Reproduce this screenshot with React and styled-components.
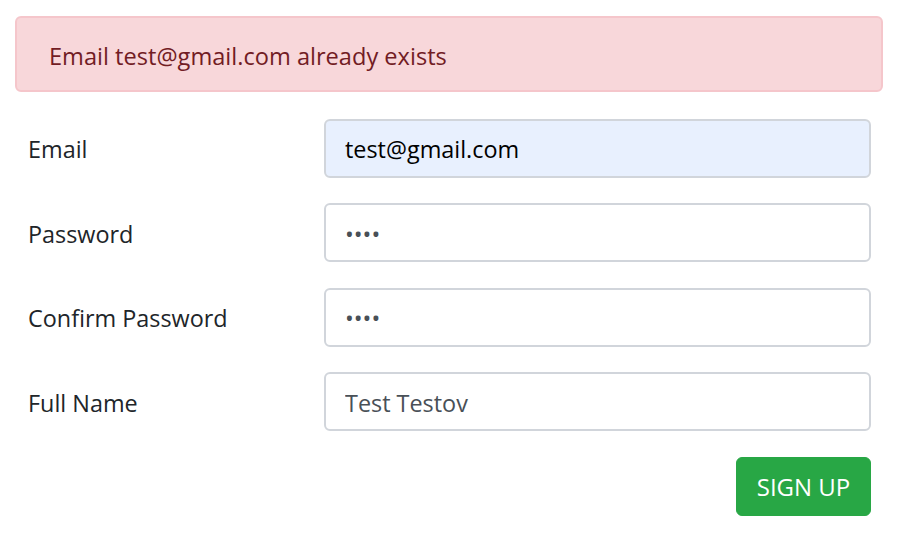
import React from "react";
import styled, { createGlobalStyle } from "styled-components";

const Global = createGlobalStyle`
  html, body { margin: 0; padding: 0; background: #fff; }
  body { font-family: "Open Sans", "Noto Sans", sans-serif; color: #212529; }
  * { box-sizing: border-box; }
`;

const Page = styled.div`
  padding: 16px 18px 0 15px;
  width: 901px;
`;

const Alert = styled.div`
  height: 76px;
  display: flex;
  align-items: center;
  padding: 3px 32px 0;
  background: #f8d7da;
  border: 2px solid #f5c6cb;
  border-radius: 6px;
  color: #721c24;
  font-size: 23.6px;
  margin-bottom: 26.5px;
`;

const Form = styled.form`
  padding: 0 12px;
  display: flex;
  flex-direction: column;
  gap: 25.5px;
`;

const Row = styled.div`
  display: grid;
  grid-template-columns: 297px 1fr;
  align-items: center;
  height: 59px;
`;

const Label = styled.label`
  font-size: 23.4px;
  color: #212529;
  padding: 2px 0 0 1px;
`;

const Input = styled.input`
  height: 59px;
  width: 100%;
  padding: 2px 19px 0;
  font-family: inherit;
  font-size: 23.4px;
  color: ${(p) => (p.$autofill ? "#000" : "#495057")};
  background: ${(p) => (p.$autofill ? "#e8f0fe" : "#fff")};
  border: 2px solid #d1d5db;
  border-radius: 6px;
  outline: none;
`;

const Actions = styled.div`
  display: flex;
  justify-content: flex-end;
`;

const Button = styled.button`
  height: 59px;
  min-width: 135px;
  padding: 0 19px;
  background: #28a745;
  border: 1.5px solid #28a745;
  border-radius: 6px;
  color: #fff;
  font-family: inherit;
  font-size: 24px;
  text-transform: uppercase;
`;

const fields = [
  { id: "email", label: "Email", type: "email", value: "test@gmail.com", autofill: true },
  { id: "password", label: "Password", type: "password", value: "test" },
  { id: "confirm", label: "Confirm Password", type: "password", value: "test" },
  { id: "name", label: "Full Name", type: "text", value: "Test Testov" },
];

export default function App() {
  return (
    <Page>
      <Global />
      <Alert>Email test@gmail.com already exists</Alert>
      <Form onSubmit={(e) => e.preventDefault()}>
        {fields.map((f) => (
          <Row key={f.id}>
            <Label htmlFor={f.id}>{f.label}</Label>
            <Input id={f.id} type={f.type} defaultValue={f.value} $autofill={f.autofill} />
          </Row>
        ))}
        <Actions>
          <Button type="submit">Sign up</Button>
        </Actions>
      </Form>
    </Page>
  );
}
